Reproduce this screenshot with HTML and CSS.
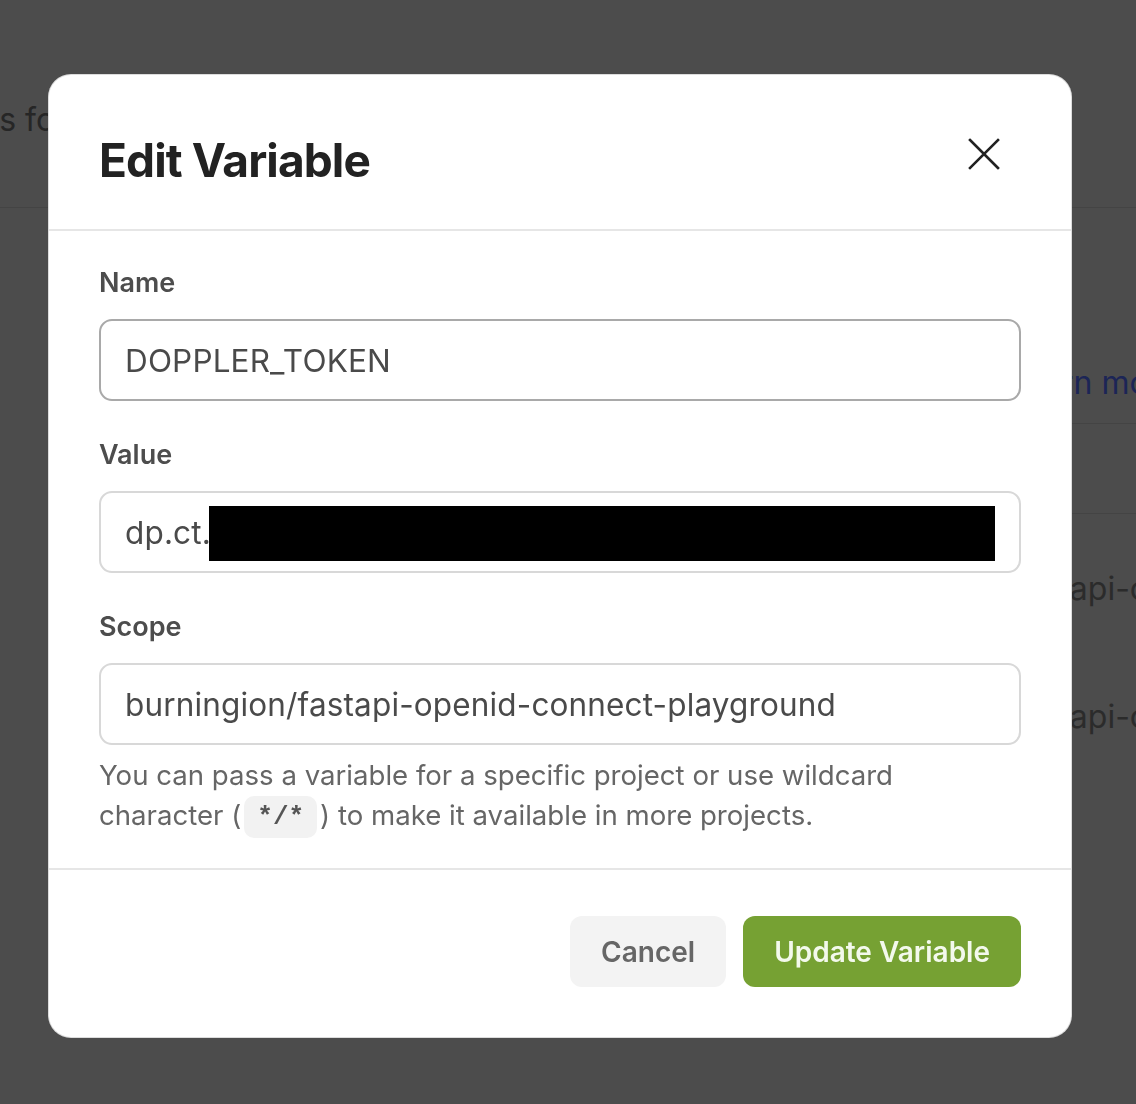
FILE: index.html
```html
<!DOCTYPE html>
<html lang="en">
<head>
<meta charset="utf-8">
<title>Edit Variable</title>
<link rel="stylesheet" href="styles.css">
</head>
<body>
<div class="page">
  <div class="page-head">
    <h1 class="page-title">Environment variables for</h1>
  </div>
  <div class="page-main">
    <div class="page-side">
      <a class="learn">Learn more</a>
      <div class="side-row side-row-first"></div>
      <div class="side-row"><span class="repo">fastapi-openid-connect</span></div>
      <div class="side-row side-row-last"><span class="repo">fastapi-openid-connect</span></div>
    </div>
  </div>
</div>

<div class="overlay">
  <div class="modal" role="dialog" aria-labelledby="modal-title">
    <div class="modal-header">
      <h2 class="modal-title" id="modal-title">Edit Variable</h2>
      <button class="close" aria-label="Close">
        <svg width="32" height="32" viewBox="0 0 32 32" fill="none" stroke="#222" stroke-width="2.6" stroke-linecap="square">
          <path d="M2 2 L30 30 M30 2 L2 30"/>
        </svg>
      </button>
    </div>
    <div class="modal-body">
      <label class="field-label">Name</label>
      <div class="input input-focus">DOPPLER_TOKEN</div>
      <label class="field-label field-gap">Value</label>
      <div class="input">dp.ct.<span class="redact"></span></div>
      <label class="field-label field-gap">Scope</label>
      <div class="input">burningion/fastapi-openid-connect-playground</div>
      <p class="help">You can pass a variable for a specific project or use wildcard character (<code class="chip">*/*</code>) to make it available in more projects.</p>
    </div>
    <div class="modal-footer">
      <button class="btn btn-cancel">Cancel</button>
      <button class="btn btn-primary">Update Variable</button>
    </div>
  </div>
</div>
</body>
</html>
```

FILE: styles.css
```css
* { box-sizing: border-box; }

html, body {
  margin: 0;
  padding: 0;
  background: #4c4c4c;
  font-family: Inter, "Noto Sans", "Liberation Sans", sans-serif;
  overflow: hidden;
}

.page {
  width: 1136px;
  height: 1104px;
  overflow: hidden;
}

.page-head {
  height: 208px;
  border-bottom: 1px solid #444444;
  padding-top: 98px;
}

.page-title {
  margin: 0 0 0 -319px;
  font-size: 32px;
  line-height: 44px;
  font-weight: 400;
  color: #262626;
  white-space: nowrap;
}

.page-main {
  display: flex;
  justify-content: flex-end;
}

.page-side {
  width: 126px;
  padding-top: 153px;
}

.learn {
  display: block;
  font-size: 32px;
  line-height: 44px;
  color: #1c2556;
  white-space: nowrap;
  margin-left: -4px;
}

.side-row {
  border-top: 1px solid #444444;
  height: 90px;
  font-size: 32px;
  color: #2b2b2b;
  white-space: nowrap;
  margin-top: 18px;
}

.side-row + .side-row { height: 128px; margin-top: 0; }

.side-row-last { border-top-color: transparent; }

.repo {
  display: block;
  margin-left: 3px;
  padding-top: 53px;
  line-height: 44px;
}

.overlay {
  position: fixed;
  inset: 0;
  padding: 75px 0 0 49px;
}

.modal {
  width: 1022px;
  background: #ffffff;
  border-radius: 22px;
  box-shadow: 0 0 0 1px #dcdcdc;
  overflow: hidden;
}

.modal-header {
  display: flex;
  justify-content: space-between;
  align-items: flex-start;
  padding: 57px 71px 41px 50px;
  border-bottom: 2px solid #e6e6e6;
}

.modal-title {
  margin: 0;
  font-size: 46px;
  line-height: 56px;
  font-weight: 700;
  color: #222222;
  letter-spacing: -0.9px;
}

.close {
  border: 0;
  background: none;
  padding: 0;
  margin-top: 6px;
  width: 32px;
  height: 32px;
  cursor: pointer;
}

.close svg { display: block; }

.modal-body {
  padding: 34px 50px 30px 50px;
  display: flex;
  flex-direction: column;
}

.field-label {
  font-size: 27px;
  line-height: 36px;
  font-weight: 600;
  color: #4d4d4d;
  margin-bottom: 18px;
}

.field-gap { margin-top: 36px; }

.input {
  height: 82px;
  border: 2px solid #d8d8d8;
  border-radius: 13px;
  padding: 0 24px;
  display: flex;
  align-items: center;
  font-size: 31.5px;
  color: #4a4a4a;
  white-space: nowrap;
  letter-spacing: 0.15px;
}

.input-focus { border-color: #a9a9a9; }

.redact {
  display: inline-block;
  width: 790px;
  height: 55px;
  background: #000000;
  margin-left: -2px;
  margin-top: 3px;
}

.help {
  margin: 10px 0 0 0;
  max-width: 880px;
  font-size: 27.6px;
  line-height: 40px;
  color: #666666;
}

.chip {
  display: inline-block;
  font-family: "Liberation Mono", "DejaVu Sans Mono", monospace;
  font-weight: 700;
  font-size: 26px;
  line-height: 42px;
  padding: 0 13px;
  margin: 0 3px 0 3px;
  background: #f2f2f2;
  border-radius: 10px;
  color: #555555;
  vertical-align: middle;
}

.modal-footer {
  display: flex;
  justify-content: flex-end;
  gap: 17px;
  padding: 46px 50px 50px 50px;
  border-top: 2px solid #e6e6e6;
}

.btn {
  height: 71px;
  border: 0;
  border-radius: 12px;
  padding: 0 31px;
  font-family: Inter, "Noto Sans", "Liberation Sans", sans-serif;
  font-size: 28px;
  font-weight: 600;
  cursor: pointer;
}

.btn-cancel {
  background: #f3f3f3;
  color: #666666;
}

.btn-primary {
  background: #76a133;
  color: #f3f9ec;
}
```
